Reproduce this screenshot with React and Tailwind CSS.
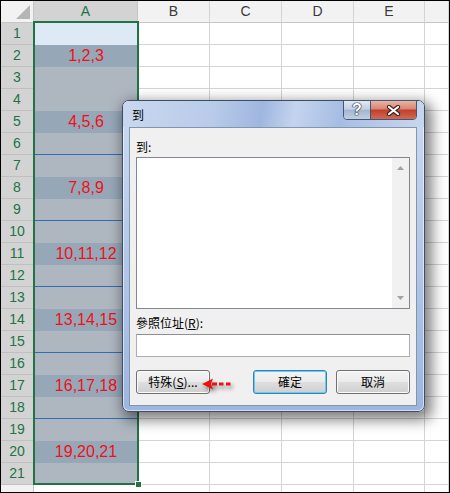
const VALUES = {
  2: '1,2,3',
  5: '4,5,6',
  8: '7,8,9',
  11: '10,11,12',
  14: '13,14,15',
  17: '16,17,18',
  20: '19,20,21',
};
const BLUE_LINE = [6, 9, 12, 15, 18];
const OTHER_COLS = [
  { name: 'B', w: 'w-[72px]' },
  { name: 'C', w: 'w-[72px]' },
  { name: 'D', w: 'w-[72px]' },
  { name: 'E', w: 'w-[71px]' },
  { name: '', w: 'flex-1' },
];

const excelFont = { fontFamily: '"Liberation Sans", Arial, sans-serif' };

function HeaderRow() {
  return (
    <div className="flex h-[22px] shrink-0 text-[14px]">
      <div className="relative w-[33px] shrink-0 border-r border-b border-[#c6c6c6] bg-[#f2f2f2]">
        <svg className="absolute right-[3px] bottom-[3px]" width="14" height="14" viewBox="0 0 14 14">
          <polygon points="14,0 14,14 0,14" fill="#b5b5b5" />
        </svg>
      </div>
      <div className="flex w-[104px] shrink-0 items-center justify-center border-r border-b border-[#c6c6c6] bg-[#d3d3d3] text-[#217346]">
        A
      </div>
      {OTHER_COLS.map((c, i) => (
        <div
          key={i}
          className={`${c.w} flex shrink-0 items-center justify-center border-r border-b border-[#d4d4d4] border-b-[#c6c6c6] bg-[#f2f2f2] text-[#3a3a3a]`}
        >
          {c.name}
        </div>
      ))}
    </div>
  );
}

function SheetRow({ n }) {
  const selected = n <= 21;
  const value = VALUES[n];
  let fill = 'bg-[#aeb6bf]';
  if (n === 1) fill = 'bg-[#dde9f5]';
  else if (value) fill = 'bg-[#96a7b8]';
  if (!selected) fill = 'bg-white';

  return (
    <div className="flex h-[22px] shrink-0">
      <div
        className={`flex w-[33px] shrink-0 items-center justify-center border-r border-b text-[14px] ${
          selected
            ? 'border-[#c0c0c0] bg-[#d3d3d3] text-[#217346]'
            : 'border-[#c6c6c6] bg-[#f2f2f2] text-[#3a3a3a]'
        }`}
      >
        {selected ? n : null}
      </div>
      <div
        className={`flex w-[104px] shrink-0 items-center justify-center text-[16px] text-[#f01018] ${fill} ${
          BLUE_LINE.includes(n) ? 'border-b border-b-[#2f6eb4]' : ''
        }`}
      >
        {value}
      </div>
      {OTHER_COLS.map((c, i) => (
        <div key={i} className={`${c.w} shrink-0 border-r border-b border-[#d4d4d4] bg-white`} />
      ))}
    </div>
  );
}

function Btn({ children, primary, className = '' }) {
  return (
    <button
      type="button"
      className={`flex h-[24px] w-[74px] items-center justify-center rounded-[3px] border text-[12px] text-black bg-[linear-gradient(180deg,#f3f3f3_0%,#ebebeb_48%,#dedede_52%,#cfcfcf_100%)] ${
        primary
          ? 'border-[#3c7fb1] shadow-[inset_0_0_0_1px_#62cdf6]'
          : 'border-[#707070] shadow-[inset_0_0_0_1px_#fbfbfb]'
      } ${className}`}
    >
      {children}
    </button>
  );
}

function GotoDialog() {
  return (
    <div
      className="absolute left-[121px] top-[99px] h-[312px] w-[303px] rounded-[7px] border border-[#3d4d66] bg-[linear-gradient(180deg,#cddbf0_0%,#b9cceb_35%,#9db6df_100%)] shadow-[4px_5px_14px_3px_rgba(0,0,0,0.5)]"
      style={{ fontFamily: '"Noto Sans CJK TC", "Noto Sans", sans-serif' }}
    >
      <div className="pointer-events-none absolute inset-0 rounded-[6px] shadow-[inset_0_0_0_1px_rgba(255,255,255,0.55)]" />

      {/* title bar */}
      <div className="relative flex h-[26px] items-center rounded-t-[6px] pl-[9px] pt-[2px] text-[12px] text-black bg-[linear-gradient(100deg,#c9d8ef_0%,#b8cbea_30%,#9fb6df_46%,#c3d4ee_57%,#a6bde3_72%,#c8d7ef_100%)]">
        到
      </div>

      {/* caption buttons */}
      <div className="absolute left-[220px] top-[-1px] flex h-[20px] overflow-hidden rounded-b-[4px] border border-[#46566f]">
        <div
          className="flex w-[27px] items-center justify-center border-r border-[#46566f] bg-[linear-gradient(180deg,#e1e9f5_0%,#c2d0e4_45%,#a4b5cf_52%,#c0cfe4_100%)] text-[16px] font-bold leading-none text-white [text-shadow:0_0_1px_#2b3443,0_0_1px_#2b3443,0_0_1px_#2b3443,0_0_1px_#2b3443]"
          style={excelFont}
        >
          ?
        </div>
        <div className="flex w-[45px] items-center justify-center bg-[linear-gradient(180deg,#eab3a6_0%,#d98874_42%,#c3412b_52%,#cf6a55_100%)]">
          <svg width="15" height="11" viewBox="0 0 15 11">
            <path d="M3 2 L12 9 M12 2 L3 9" stroke="#3a2020" strokeWidth="4.2" strokeLinecap="round" fill="none" />
            <path d="M3 2 L12 9 M12 2 L3 9" stroke="#ffffff" strokeWidth="2.2" strokeLinecap="round" fill="none" />
          </svg>
        </div>
      </div>

      {/* client area */}
      <div className="ml-[6px] flex h-[279px] w-[288px] flex-col border border-[#8394ad] bg-[#f0f0f0] px-[6px] text-[12px] text-black">
        <div className="mt-[12px] h-[14px] leading-[14px]">到:</div>
        <div className="mt-[3px] flex h-[152px] border border-[#828790] bg-white">
          <div className="flex-1" />
          <div className="flex w-[17px] flex-col items-center justify-between bg-[#f1f1f1] py-[8px]">
            <svg width="7" height="4" viewBox="0 0 7 4">
              <polygon points="3.5,0 7,4 0,4" fill="#a2a2a2" />
            </svg>
            <svg width="7" height="4" viewBox="0 0 7 4">
              <polygon points="0,0 7,0 3.5,4" fill="#a2a2a2" />
            </svg>
          </div>
        </div>
        <div className="mt-[7px] h-[14px] leading-[14px]">
          參照位址(<span className="underline">R</span>):
        </div>
        <div className="mt-[4px] h-[23px] border border-[#abadb3] border-t-[#8e8f8f] bg-white" />
        <div className="mt-[13px] flex">
          <Btn>
            特殊(<span className="underline">S</span>)...
          </Btn>
          <Btn primary className="ml-auto">
            確定
          </Btn>
          <Btn className="ml-[9px]">取消</Btn>
        </div>
      </div>
    </div>
  );
}

function RedArrow() {
  return (
    <svg
      className="absolute left-[195px] top-[373px] drop-shadow-[2px_3px_2px_rgba(0,0,0,0.45)]"
      width="40"
      height="20"
      viewBox="0 0 40 20"
    >
      <polygon points="6,10 17,4.5 15,10 17,15.5" fill="#ee1111" />
      <rect x="16" y="8.5" width="5" height="3" fill="#ee1111" />
      <rect x="23" y="8.5" width="4.5" height="3" fill="#ee1111" />
      <rect x="30" y="8.5" width="4.5" height="3" fill="#ee1111" />
    </svg>
  );
}

export default function App() {
  const rows = Array.from({ length: 22 }, (_, i) => i + 1);
  return (
    <div
      className="relative flex h-[493px] w-[450px] flex-col overflow-hidden border border-black bg-white"
      style={excelFont}
    >
      <HeaderRow />
      {rows.map((n) => (
        <SheetRow key={n} n={n} />
      ))}

      {/* selection border A1:A21 */}
      <div className="pointer-events-none absolute left-[32px] top-[20px] h-[464px] w-[106px] border-2 border-[#217346]" />
      <div className="pointer-events-none absolute left-[134px] top-[480px] h-[7px] w-[7px] border border-white bg-[#217346]" />

      <GotoDialog />
      <RedArrow />
    </div>
  );
}
